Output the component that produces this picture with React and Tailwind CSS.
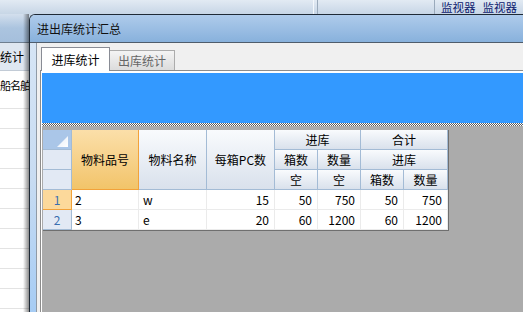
import React from 'react';

const FONT = "font-['Noto_Sans_CJK_SC','Noto_Sans',sans-serif]";

const COLS = 'grid-cols-[29px_67px_68px_68px_43px_43px_43px_44px]';

const head = 'flex items-center justify-center border-r border-b border-[#a3bbd5] bg-gradient-to-b from-[#f9fbfd] to-[#d9e1ec] text-black';
const rowHead = 'flex items-center justify-center border-r border-b border-[#a3bbd5] bg-[#e2e9f4] text-[#3a6fb0]';
const cell = 'flex items-center border-r border-b border-[#ebebeb] bg-white text-black';

const rows = [
    { n: '1', code: '2', name: 'w', pc: '15', inBox: '50', inQty: '750', sumBox: '50', sumQty: '750', sel: true },
    { n: '2', code: '3', name: 'e', pc: '20', inBox: '60', inQty: '1200', sumBox: '60', sumQty: '1200' },
];

const LeftStrip = () => (
    <div className="relative w-[29px] shrink-0 flex flex-col bg-white overflow-hidden">
        <div className="h-[28px] bg-gradient-to-b from-[#d3dfed] via-[#abc4df] to-[#a5bfdc]" />
        <div className="h-[1px] bg-[#6f7f90]" />
        <div className="h-[27px] bg-[#dfe7f1] flex items-center justify-end pr-[5px] whitespace-nowrap">统计</div>
        <div className="h-[1px] bg-[#c2cbd6]" />
        <div className="h-[38px] border-b border-[#e3e3e3] pt-[9px] whitespace-nowrap text-[11px] tracking-[-1px]">船名舶</div>
        {Array.from({ length: 10 }).map((_, i) => (
            <div key={i} className="h-[20px] shrink-0 border-b border-[#e3e3e3]" />
        ))}
        <div className="absolute inset-y-0 right-0 w-[6px] bg-gradient-to-r from-transparent to-black/45" />
    </div>
);

const Grid = () => (
    <div className={`grid ${COLS} grid-rows-[20px_20px_20px_20px_20px] w-max border-r border-b border-[#6f6f6f]`}>
        {/* corner */}
        <div className="border-r border-b border-[#a3bbd5] bg-[#aac6e8] flex items-end justify-end pr-[3px] pb-[2px]">
            <svg width="11" height="11" viewBox="0 0 11 11">
                <defs>
                    <linearGradient id="tri" x1="0" y1="0" x2="1" y2="1">
                        <stop offset="0" stopColor="#e3ecf7" />
                        <stop offset="1" stopColor="#ffffff" />
                    </linearGradient>
                </defs>
                <polygon points="11,0 11,11 0,11" fill="url(#tri)" />
            </svg>
        </div>
        <div className="row-span-3 flex items-center justify-center border-r border-b border-[#f2a23a] bg-gradient-to-b from-[#fbdfa9] to-[#f2c469] text-black">物料品号</div>
        <div className={`${head} row-span-3`}>物料名称</div>
        <div className={`${head} row-span-3`}>每箱PC数</div>
        <div className={`${head} col-span-2`}>进库</div>
        <div className={`${head} col-span-2`}>合计</div>

        <div className={rowHead} />
        <div className={head}>箱数</div>
        <div className={head}>数量</div>
        <div className={`${head} col-span-2`}>进库</div>

        <div className={rowHead} />
        <div className={head}>空</div>
        <div className={head}>空</div>
        <div className={head}>箱数</div>
        <div className={head}>数量</div>

        {rows.map((r) => (
            <React.Fragment key={r.n}>
                {r.sel ? (
                    <div className="flex items-center justify-center border-r border-b border-[#f2a23a] bg-[#fcd99b] text-[#3a6fb0]">{r.n}</div>
                ) : (
                    <div className={rowHead}>{r.n}</div>
                )}
                <div className={`${cell} pl-[3px] ${r.sel ? 'bg-[#e8ebf5]' : ''}`}>{r.code}</div>
                <div className={`${cell} pl-[4px]`}>{r.name}</div>
                <div className={`${cell} justify-end pr-[5px]`}>{r.pc}</div>
                <div className={`${cell} justify-end pr-[5px]`}>{r.inBox}</div>
                <div className={`${cell} justify-end pr-[5px]`}>{r.inQty}</div>
                <div className={`${cell} justify-end pr-[5px]`}>{r.sumBox}</div>
                <div className={`${cell} justify-end pr-[5px]`}>{r.sumQty}</div>
            </React.Fragment>
        ))}
    </div>
);

const Window = () => (
    <div className="flex-1 min-w-0 flex flex-col border-l border-t border-[#1f2a36] rounded-tl-[6px] overflow-hidden">
        <div className="h-[27px] shrink-0 flex items-center pl-[7px] bg-gradient-to-b from-[#aecbeb] to-[#88b1dc] text-[#111] text-[12px]">
            进出库统计汇总
        </div>
        <div className="h-[1px] bg-[#4f5d6c]" />
        <div className="flex-1 min-h-0 flex">
            <div className="w-[6px] shrink-0 bg-gradient-to-b from-[#d6e5f5] via-[#c8dcf2] to-[#a6ccf4]" />
            <div className="flex-1 min-w-0 flex flex-col border-l border-[#8f9aa6] bg-[#f0f0f0]">
                {/* tabs */}
                <div className="h-[27px] shrink-0 flex items-end pl-[4px]">
                    <div className="relative z-10 -mb-[1px] h-[24px] w-[69px] flex items-center justify-center border border-b-0 border-[#898c95] bg-white text-black">
                        进库统计
                    </div>
                    <div className="h-[20px] w-[65px] flex items-center justify-center border border-l-0 border-b-0 border-[#acacac] bg-gradient-to-b from-[#f4f4f4] to-[#dcdcdc] text-[#666666]">
                        出库统计
                    </div>
                </div>
                {/* panel */}
                <div className="flex-1 min-h-0 ml-[3px] flex flex-col border-l border-t border-[#8c8c8c] bg-white pt-[2px] pl-[1px]">
                    <div className="h-[50px] shrink-0 bg-[#3399ff]" />
                    <div className="h-[3px] shrink-0 bg-[repeating-conic-gradient(#5a5a5a_0_25%,#ffffff_0_50%)] bg-[length:2px_2px]" />
                    <div className="flex-1 min-h-0 bg-[#ababab] pt-[4px] pl-[1px]">
                        <Grid />
                    </div>
                </div>
            </div>
        </div>
    </div>
);

const App = () => {
    return (
        <div className={`w-[523px] h-[312px] overflow-hidden flex flex-col bg-[#c9d8e8] ${FONT} text-[12px] leading-none`}>
            {/* background app bar */}
            <div className="h-[14px] shrink-0 flex bg-gradient-to-b from-[#e2eaf3] to-[#c7d6e6]">
                <div className="w-[313px] shrink-0" />
                <div className="w-[5px] shrink-0 border-l border-r border-l-[#f4f8fc] border-r-[#9aaabb]" />
                <div className="w-[116px] shrink-0" />
                <div className="w-[2px] shrink-0 border-l border-[#9aaabb]" />
                <div className="shrink-0 pl-[5px] pt-[1px] flex items-start gap-[7px] whitespace-nowrap text-[#0c206e] text-[11.5px] leading-[12px]">
                    <span>监视器</span>
                    <span>监视器</span>
                </div>
            </div>
            <div className="flex-1 min-h-0 flex">
                <LeftStrip />
                <Window />
            </div>
        </div>
    );
};

export default App;
